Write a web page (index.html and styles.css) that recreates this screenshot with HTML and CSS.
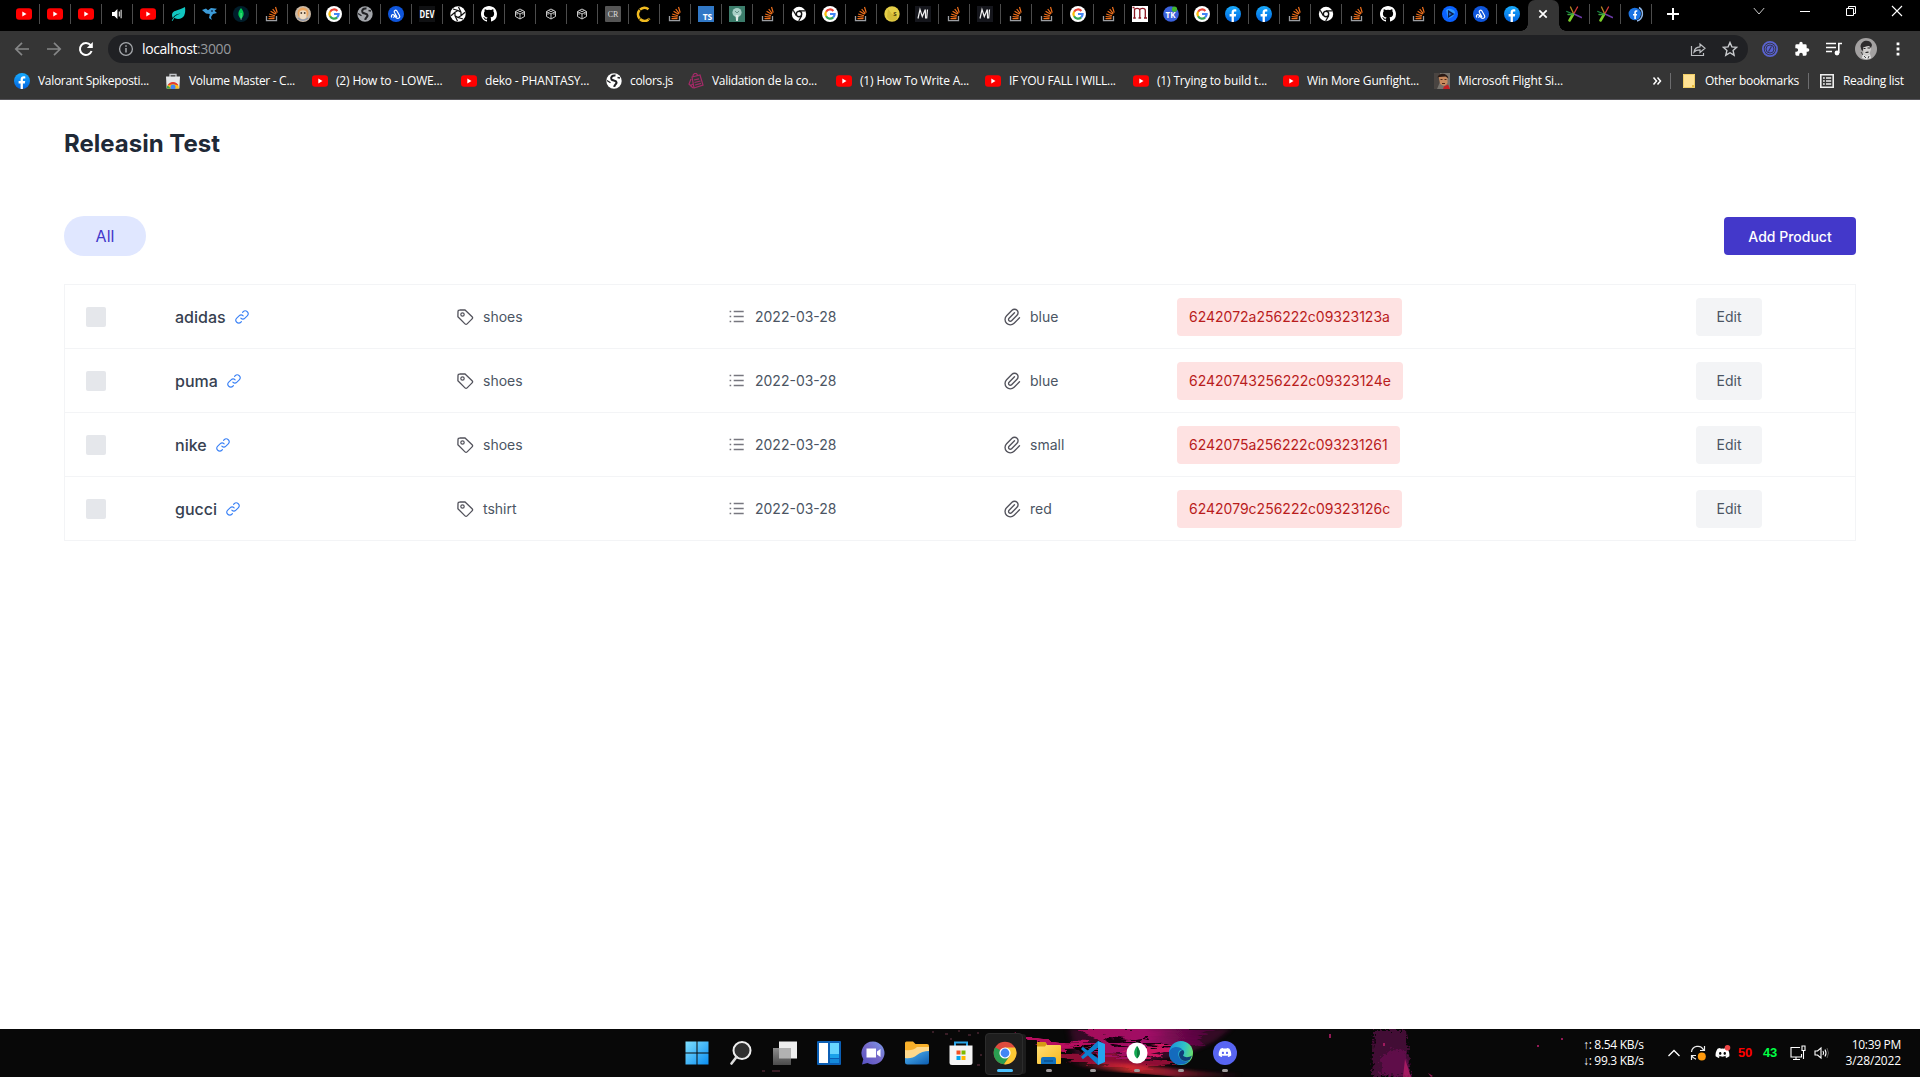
FILE: index.html
```html
<!DOCTYPE html>
<html lang="en">
<head>
<meta charset="utf-8">
<title>Releasin Test</title>
<link rel="stylesheet" href="styles.css">
</head>
<body>
<svg class="sprite" aria-hidden="true">
  <defs>
    <linearGradient id="gfb" x1="0" y1="0" x2="0" y2="1"><stop offset="0" stop-color="#18acfe"/><stop offset="1" stop-color="#0163e0"/></linearGradient>
    <linearGradient id="gwin" x1="0" y1="0" x2="1" y2="1"><stop offset="0" stop-color="#7fe0ff"/><stop offset="1" stop-color="#0a8df0"/></linearGradient>
    <linearGradient id="gchat" x1="1" y1="0" x2="0" y2="1"><stop offset="0" stop-color="#7b9bea"/><stop offset=".5" stop-color="#7568c8"/><stop offset="1" stop-color="#5552c4"/></linearGradient>
    <linearGradient id="gfold" x1="0" y1="0" x2="1" y2="1"><stop offset="0" stop-color="#ffe27a"/><stop offset="1" stop-color="#f9b81f"/></linearGradient>
    <linearGradient id="gblue" x1="0" y1="0" x2="1" y2="1"><stop offset="0" stop-color="#56b8f4"/><stop offset="1" stop-color="#0b5cb0"/></linearGradient>
    <linearGradient id="gedge" x1="0" y1=".3" x2="1" y2=".5"><stop offset="0" stop-color="#1c8fdc"/><stop offset=".6" stop-color="#2fc2c8"/><stop offset="1" stop-color="#6be06b"/></linearGradient>
    <linearGradient id="ggrey" x1="0" y1="0" x2="0" y2="1"><stop offset="0" stop-color="#8c8c8c"/><stop offset="1" stop-color="#4b4b4b"/></linearGradient>
    <linearGradient id="gsky" x1="0" y1="0" x2="1" y2="0"><stop offset="0" stop-color="#a50c58"/><stop offset=".5" stop-color="#a00a66"/><stop offset="1" stop-color="#5b0748" stop-opacity=".5"/></linearGradient>
    <linearGradient id="gred" x1="0" y1="0" x2="1" y2="0"><stop offset="0" stop-color="#a01238" stop-opacity=".1"/><stop offset=".35" stop-color="#e0302f"/><stop offset=".6" stop-color="#a81d38"/><stop offset="1" stop-color="#5a1020" stop-opacity=".1"/></linearGradient>
    <filter id="rough" x="-5%" y="-20%" width="110%" height="140%"><feTurbulence type="fractalNoise" baseFrequency=".04 .35" numOctaves="3" seed="4"/><feDisplacementMap in="SourceGraphic" scale="16"/></filter>
    <filter id="soft"><feGaussianBlur stdDeviation="3 1.500"/></filter>
    <filter id="grain"><feTurbulence type="fractalNoise" baseFrequency=".35" numOctaves="2" seed="7" result="n"/><feDisplacementMap in="SourceGraphic" in2="n" scale="9"/></filter>
  </defs>
  <symbol id="yt" viewBox="0 0 16 16"><rect y="2.200" width="16" height="11.600" rx="3" fill="#f00"/><path d="M6.300 5.600v4.800L10.500 8z" fill="#fff"/></symbol>
  <symbol id="sound" viewBox="0 0 16 16"><path d="M3 6h2.400L8.400 3v10l-3-3H3zM9.800 5.400h1v5.200h-1zM11.600 3.800h1v8.400h-1z" fill="#fff"/></symbol>
  <symbol id="leaf" viewBox="0 0 16 16"><path d="M1 9C1 4 7 5 14 1c1 7-1 12-7 12-2 0-3-.6-3.600-1.200L1.500 15l-.8-.6C3 10.500 6 8.500 9.500 7.500 5 8 3 10 1.800 12 1.200 11 1 10 1 9z" fill="#11c6c0"/></symbol>
  <symbol id="bird" viewBox="0 0 16 16"><path d="M0 4l4-1.500 2 1.800L9 2l6 .7-2.500 2L15 7l-4 1-2 3 .8 3L7 12l.8-4L4 7.500z" fill="#3c9bd8"/><circle cx="10" cy="5" r="1" fill="#13365c"/></symbol>
  <symbol id="mongo" viewBox="0 0 16 16"><circle cx="8" cy="8" r="8" fill="#001e2b"/><path d="M8 2c4 4.500 3 8.500 0 11C5 10.500 4 6.500 8 2z" fill="#00c853"/><path d="M7.800 7h.5v7h-.5z" fill="#b5f0ce"/></symbol>
  <symbol id="so" viewBox="0 0 16 16"><path d="M2.500 10v4.600h10V10" fill="none" stroke="#9b9ea3" stroke-width="1.300"/><path d="M4.500 12.600h6M4.600 10.500l6 .6M5.200 8l5.700 1.700M6.600 5.300l5 3M8.700 3l3.600 4.600M11.500 1l1.700 5.600" stroke="#f0701c" stroke-width="1.200"/></symbol>
  <symbol id="face" viewBox="0 0 16 16"><circle cx="8" cy="8" r="8" fill="#c9b9a6"/><circle cx="8" cy="7" r="5.500" fill="#e9a45f"/><path d="M4.500 6.500c0-3 7-3 7 0v4.500c-2 3-5 3-7 0z" fill="#efdcc2"/><circle cx="6.300" cy="7" r=".9" fill="#46382f"/><circle cx="9.700" cy="7" r=".9" fill="#46382f"/><path d="M3 12c3 3 7 3 10 0" stroke="#8d97ad" stroke-width="1.500" fill="none"/></symbol>
  <symbol id="google" viewBox="0 0 16 16"><circle cx="8" cy="8" r="8" fill="#fff"/><g fill="none" stroke-width="2.200"><path d="M4.100 5.700A4.600 4.600 0 0 1 11.400 4.900" stroke="#ea4335"/><path d="M4.100 10.400A4.600 4.600 0 0 1 4.100 5.600" stroke="#fbbc05"/><path d="M11.200 11.400A4.600 4.600 0 0 1 4.100 10.300" stroke="#34a853"/><path d="M8 8h4.600a4.600 4.600 0 0 1-1.500 3.400" stroke="#4285f4"/></g></symbol>
  <symbol id="globe" viewBox="0 0 16 16"><circle cx="8" cy="8" r="7.700" fill="currentColor"/><path d="M9.500 2.500C6 2 4.500 4.500 5.500 6.300c1 1.500 4.800.8 5 3 .2 1.800-2 2.200-2.300 4.500" fill="none" stroke="#202124" stroke-width="2.100"/><path d="M1 7.500l3.500 2.300M11.500 4.500l2.500.5" stroke="#202124" stroke-width="1.300"/></symbol>
  <symbol id="acircle" viewBox="0 0 16 16"><circle cx="8" cy="8" r="8" fill="#0f56dc"/><g fill="none" stroke="#fff" stroke-width="1.200"><path d="M4 11.500c-1.500-1.500 0-3.500 1.500-2.800L8.500 12c2 1 4-.5 3-2.500L8.800 4.800c-1.300-1.300-3 0-2.500 1.500L9 11M7.500 8.500l-2 3.300"/></g></symbol>
  <symbol id="swirl" viewBox="0 0 16 16"><circle cx="8" cy="8" r="7.700" fill="#fff"/><path d="M8 4.500l3 1.800v3.400l-3 1.800-3-1.800V6.300zM11 6.300L8.500 1M11 9.700l4-3.500M8 11.500l5 1.500M5 9.700L7.500 15M5 6.300L1 9.800M8 4.500L3 3" fill="none" stroke="#111" stroke-width="1.200"/></symbol>
  <symbol id="github" viewBox="0 0 16 16"><path fill="#fff" d="M8 0C3.580 0 0 3.580 0 8c0 3.540 2.290 6.530 5.470 7.590.4.070.55-.17.55-.38v-1.490c-2.230.48-2.700-1.070-2.700-1.070-.36-.92-.89-1.170-.89-1.170-.73-.5.050-.49.050-.49.810.06 1.230.83 1.230.83.720 1.230 1.880.87 2.340.67.070-.52.280-.87.510-1.070-1.780-.2-3.640-.89-3.640-3.950 0-.87.310-1.590.82-2.150-.08-.2-.36-1.020.08-2.120 0 0 .67-.21 2.200.82a7.600 7.600 0 0 1 4 0c1.530-1.040 2.200-.82 2.200-.82.440 1.100.16 1.920.08 2.120.51.560.82 1.270.82 2.150 0 3.070-1.870 3.750-3.650 3.950.29.250.54.730.54 1.480v2.200c0 .21.150.46.550.38A8 8 0 0 0 16 8c0-4.420-3.580-8-8-8z"/></symbol>
  <symbol id="cube" viewBox="0 0 16 16"><path d="M8 3l4.500 2.500v5L8 13l-4.500-2.500v-5zM3.500 5.500L8 8l4.500-2.500M8 8v5M5.500 4.300L8 5.700l2.500-1.400M5 6.300v2.500M11 6.300v2.500" fill="none" stroke="#c9c9c9" stroke-width="1"/></symbol>
  <symbol id="cring" viewBox="0 0 16 16"><path d="M12.500 3.200A6.500 6.500 0 1 0 13.500 12.500" fill="none" stroke="#f0bb20" stroke-width="2.600" stroke-dasharray="9 .6"/></symbol>
  <symbol id="lamp" viewBox="0 0 16 16"><rect width="16" height="16" fill="#3c7d6b"/><circle cx="8" cy="6.500" r="4.600" fill="#a8cfc6"/><path d="M6.500 9h3l-.6 6H7.100z" fill="#dce9e5"/><path d="M6 5l2 2 2-2" stroke="#648f86" fill="none"/></symbol>
  <symbol id="chromew" viewBox="0 0 16 16"><circle cx="8" cy="8" r="7.200" fill="#fff"/><circle cx="8" cy="8" r="2.700" fill="#fff" stroke="#111" stroke-width="1.400"/><path d="M8 4.900h6.300M5.300 9.600L2.200 4.200M10.700 9.600l-3 5.400" stroke="#111" stroke-width="1.200"/></symbol>
  <symbol id="mdark" viewBox="0 0 16 16"><rect width="16" height="16" fill="#15161c"/><path d="M3 12.500l2-9 2.300 7 3-7 .3 9M12.500 3.500l-.8 9" fill="none" stroke="#f2f2f2" stroke-width="1.200"/></symbol>
  <symbol id="mred" viewBox="0 0 16 16"><rect width="16" height="16" fill="#fff"/><path d="M2.500 12V2.500M2.500 4c0-2 5.300-2.500 5.300.5V12M7.800 4c0-2 5.500-2.500 5.500.5V12M.5 1.500h2M12 12h3M1.200 12h2.600M6.500 12h2.600" fill="none" stroke="#8c1822" stroke-width="1.300"/></symbol>
  <symbol id="fb" viewBox="0 0 16 16"><circle cx="8" cy="8" r="8" fill="url(#gfb)"/><path d="M8.900 16v-5.600h1.900l.4-2.300H8.900V6.700c0-.7.300-1.200 1.200-1.200h1.200V3.400c-2.700-.6-4.700.1-4.700 2.900v1.800h-2v2.300h2V16z" fill="#fff"/></symbol>
  <symbol id="play" viewBox="0 0 16 16"><circle cx="8" cy="8" r="8" fill="#0b62ff"/><path d="M4 4a6 6 0 0 1 9 2c0 3-3 6-7 6.500z" fill="#2f98ff"/><path d="M6 4v8l6.500-4z" fill="#09204e"/><path d="M7 6.500v3.200L9.800 8z" fill="#1c62d8"/></symbol>
  <symbol id="burst" viewBox="0 0 16 16"><g stroke-linecap="round"><path d="M7 8L.8 5.500" stroke="#1d8d4a" stroke-width="1.300"/><path d="M7.500 7.500L4.500 1" stroke="#b98422" stroke-width="1.300"/><path d="M8 7.500l3.500-6.500" stroke="#d63b3b" stroke-width="1.300"/><path d="M8 8l7.500 3.500" stroke="#6a3aa5" stroke-width="1.400"/><path d="M7 8.500L3.500 14.500" stroke="#7bcf2a" stroke-width="2.600"/><path d="M7 8.500H2" stroke="#3ca63d" stroke-width="1.400"/></g></symbol>
  <symbol id="fring" viewBox="0 0 16 16"><circle cx="6.800" cy="8" r="6.200" fill="#1b74e4"/><path d="M7.100 13V6.300c0-1 .6-1.400 2.200-1.300M5 8.700h4" stroke="#fff" stroke-width="1.600" fill="none"/><path d="M11 1.500a7.500 7.500 0 0 1-2 13.500" fill="none" stroke="#8fb7ea" stroke-width="1.500"/></symbol>
  <symbol id="store" viewBox="0 0 16 16"><path d="M5 4V1.500h6V4" fill="none" stroke="#c5c8cc" stroke-width="1.300"/><path d="M1 3.500h14l-.6 12H1.600z" fill="#e4e6e8"/><path d="M2 15.500a6 6 0 0 1 12 0z" fill="#fbc116"/><path d="M2.500 12.500a6 6 0 0 1 11 0L8 11z" fill="#e33b2e"/><path d="M1.800 15.500c0-1.500.3-2 .8-3l3.400 3z" fill="#2f9e4f"/><circle cx="8" cy="14" r="2.500" fill="#4285f4"/></symbol>
  <symbol id="valid" viewBox="0 0 16 16"><path d="M4 4l8-2 3 10-9 3zM5 4c-.5-4 4-5 4.500-1.500M6 7l5-1.200M6.500 9.500l6-1.500M3 6l-2 5 4 4M2 13l3-2M7 12l6-1.600" fill="none" stroke="#a52a68" stroke-width="1.200"/></symbol>
  <symbol id="pilot" viewBox="0 0 16 16"><rect width="16" height="16" fill="#77736d"/><path d="M0 0h6v9l-3 7H0z" fill="#4a4542"/><path d="M4.500 3c2-2 9-2 9 2v4.500c-1 4-5 4-7.500 1z" fill="#c98a5e"/><path d="M3.500 4.500c1-5 10-5 11 1l-3-2-6 .5z" fill="#2b1a14"/><path d="M10 13.500l4-2 2 4.500H9z" fill="#c51f24"/><path d="M6.500 6.500h2M10.500 6.500h2M8 10.500h3" stroke="#4c2a1a"/></symbol>
  <symbol id="chrome" viewBox="0 0 24 24"><circle cx="12" cy="12" r="11.300" fill="#de4b3e"/><path d="M2.200 6.300A11.300 11.300 0 0 0 11 23.300L16.900 14.800 12 12z" fill="#2a9e50"/><path d="M11 23.300A11.300 11.300 0 0 0 22 6.500H12l4.900 8.300z" fill="#fcc934"/><circle cx="12" cy="12" r="5.600" fill="#fff"/><circle cx="12" cy="12" r="4.400" fill="#4285f4"/></symbol>
  <symbol id="discord" viewBox="0 0 24 24"><path fill="currentColor" d="M18.600 6.300a14 14 0 0 0-3.600-1.100l-.5 1a13 13 0 0 0-5 0l-.5-1c-1.300.2-2.500.6-3.600 1.100C3.100 9.700 2.500 13 2.800 16.300c1.500 1.100 3 1.800 4.400 2.200l1-1.700-1.500-.7.400-.3c3 1.400 6.700 1.400 9.800 0l.4.300-1.500.7 1 1.700c1.400-.4 2.900-1.100 4.400-2.200.4-3.800-.6-7.100-2.600-10zM9 14.300c-.9 0-1.600-.8-1.600-1.800S8.100 10.700 9 10.700s1.600.8 1.600 1.800-.7 1.800-1.600 1.800zm6 0c-.9 0-1.600-.8-1.600-1.800s.7-1.800 1.600-1.800 1.600.8 1.600 1.800-.7 1.800-1.600 1.800z"/></symbol>
  <symbol id="tag" viewBox="0 0 18 18"><path d="M2 3.500A1.500 1.500 0 0 1 3.500 2l5.300-.2 7.300 7a1.500 1.500 0 0 1 0 2.100l-5 5a1.500 1.500 0 0 1-2.100 0L1.900 8.700z" fill="none" stroke="#52525b" stroke-width="1.300" stroke-linejoin="round"/><circle cx="6.500" cy="6.500" r="1.700" fill="none" stroke="#52525b" stroke-width="1.200"/></symbol>
  <symbol id="list" viewBox="0 0 20 20"><path d="M6.700 4.500h10M6.700 9.500h10M6.700 14.500h10M2.600 4.500h1.600M2.600 9.500h1.600M2.600 14.500h1.600" stroke="#77777f" stroke-width="1.500"/></symbol>
  <symbol id="clip" viewBox="0 0 20 20"><path d="M12.500 5.833L7.083 11.250a1.768 1.768 0 1 0 2.500 2.500L15 8.333a3.536 3.536 0 1 0-5-5L4.583 8.750a5.303 5.303 0 1 0 7.500 7.500L17.500 10.833" fill="none" stroke="#52525b" stroke-width="1.350" stroke-linecap="round" stroke-linejoin="round"/></symbol>
  <symbol id="link" viewBox="0 0 16 16"><path d="M6.667 9.333a3.333 3.333 0 0 0 4.666 0L14 6.667A3.300 3.300 0 0 0 9.333 2l-.666.667M9.333 6.667a3.333 3.333 0 0 0-4.666 0L2 9.333A3.300 3.300 0 0 0 6.667 14l.666-.667" fill="none" stroke="#3b82f6" stroke-width="1.300" stroke-linecap="round" stroke-linejoin="round"/></symbol>
</svg>

<header class="browser">
  <div class="tabs">
    <div class="tab"><svg><use href="#yt"/></svg></div>
    <div class="tab"><svg><use href="#yt"/></svg></div>
    <div class="tab"><svg><use href="#yt"/></svg></div>
    <div class="tab"><svg><use href="#sound"/></svg></div>
    <div class="tab"><svg><use href="#yt"/></svg></div>
    <div class="tab"><svg><use href="#leaf"/></svg></div>
    <div class="tab"><svg><use href="#bird"/></svg></div>
    <div class="tab"><svg><use href="#mongo"/></svg></div>
    <div class="tab"><svg><use href="#so"/></svg></div>
    <div class="tab"><svg><use href="#face"/></svg></div>
    <div class="tab"><svg><use href="#google"/></svg></div>
    <div class="tab"><svg class="muted"><use href="#globe"/></svg></div>
    <div class="tab"><svg><use href="#acircle"/></svg></div>
    <div class="tab"><svg viewBox="0 0 16 16"><rect width="16" height="16" fill="#101113"/><text x=".5" y="11.500" textLength="15" lengthAdjust="spacingAndGlyphs" class="glyph bold" fill="#fff" font-size="10">DEV</text></svg></div>
    <div class="tab"><svg><use href="#swirl"/></svg></div>
    <div class="tab"><svg><use href="#github"/></svg></div>
    <div class="tab"><svg><use href="#cube"/></svg></div>
    <div class="tab"><svg><use href="#cube"/></svg></div>
    <div class="tab"><svg><use href="#cube"/></svg></div>
    <div class="tab"><svg viewBox="0 0 16 16"><rect width="16" height="16" rx="1" fill="#555"/><text x="8" y="11" text-anchor="middle" class="glyph serif" fill="#ddd" font-size="8">CR</text></svg></div>
    <div class="tab"><svg><use href="#cring"/></svg></div>
    <div class="tab"><svg><use href="#so"/></svg></div>
    <div class="tab"><svg viewBox="0 0 16 16"><rect width="16" height="16" fill="#3178c6"/><text x="9.500" y="14" text-anchor="middle" class="glyph bold" fill="#fff" font-size="8.500">TS</text></svg></div>
    <div class="tab"><svg><use href="#lamp"/></svg></div>
    <div class="tab"><svg><use href="#so"/></svg></div>
    <div class="tab"><svg><use href="#chromew"/></svg></div>
    <div class="tab"><svg><use href="#google"/></svg></div>
    <div class="tab"><svg><use href="#so"/></svg></div>
    <div class="tab"><svg viewBox="0 0 16 16"><circle cx="8" cy="8" r="7.700" fill="#e5ce47"/><path d="M4 3l4 5h5v5c-3 2.500-8 2-10-2z" fill="#d3bb38"/><text x="11" y="10" text-anchor="middle" class="glyph bold" fill="#4d410c" font-size="6">S</text></svg></div>
    <div class="tab"><svg><use href="#mdark"/></svg></div>
    <div class="tab"><svg><use href="#so"/></svg></div>
    <div class="tab"><svg><use href="#mdark"/></svg></div>
    <div class="tab"><svg><use href="#so"/></svg></div>
    <div class="tab"><svg><use href="#so"/></svg></div>
    <div class="tab"><svg><use href="#google"/></svg></div>
    <div class="tab"><svg><use href="#so"/></svg></div>
    <div class="tab"><svg><use href="#mred"/></svg></div>
    <div class="tab"><svg viewBox="0 0 16 16"><circle cx="8" cy="8" r="7.800" fill="#3a62dc"/><circle cx="11.500" cy="3.200" r="2.600" fill="#43b52f"/><text x="7.500" y="12" text-anchor="middle" class="glyph bold" fill="#fff" font-size="8">TK</text></svg></div>
    <div class="tab"><svg><use href="#google"/></svg></div>
    <div class="tab"><svg><use href="#fb"/></svg></div>
    <div class="tab"><svg><use href="#fb"/></svg></div>
    <div class="tab"><svg><use href="#so"/></svg></div>
    <div class="tab"><svg><use href="#chromew"/></svg></div>
    <div class="tab"><svg><use href="#so"/></svg></div>
    <div class="tab"><svg><use href="#github"/></svg></div>
    <div class="tab"><svg><use href="#so"/></svg></div>
    <div class="tab"><svg><use href="#play"/></svg></div>
    <div class="tab"><svg><use href="#acircle"/></svg></div>
    <div class="tab plain"><svg><use href="#fb"/></svg></div>
    <div class="tab active"><svg viewBox="0 0 16 16"><path d="M4.300 4.300l7.400 7.400M11.700 4.300l-7.400 7.400" stroke="#fff" stroke-width="1.700"/></svg></div>
    <div class="tab"><svg><use href="#burst"/></svg></div>
    <div class="tab"><svg><use href="#burst"/></svg></div>
    <div class="tab"><svg><use href="#fring"/></svg></div>
    <svg class="newtab" viewBox="0 0 16 16"><path d="M8 2v12M2 8h12" stroke="#fff" stroke-width="2"/></svg>
    <div class="window-controls">
      <svg viewBox="0 0 12 12"><path d="M.8 3l5.200 6 5.200-6" fill="none" stroke="#c9c9c9"/></svg>
      <svg viewBox="0 0 12 12"><path d="M1 6.500h10" stroke="#fff"/></svg>
      <svg viewBox="0 0 12 12"><path d="M1.500 3.500h7v7h-7zM3.500 3.500v-2h7v7h-2" fill="none" stroke="#fff"/></svg>
      <svg viewBox="0 0 12 12"><path d="M1 1l10 10M11 1L1 11" stroke="#fff" stroke-width="1.100"/></svg>
    </div>
  </div>

  <div class="toolbar">
    <svg class="nav" viewBox="0 0 16 16"><path d="M15 8H2M8 1.800L1.800 8 8 14.200" fill="none" stroke="#858687" stroke-width="1.700"/></svg>
    <svg class="nav" viewBox="0 0 16 16"><path d="M1 8h13M8 1.800L14.200 8 8 14.200" fill="none" stroke="#858687" stroke-width="1.700"/></svg>
    <svg class="nav" viewBox="0 0 16 16"><path d="M13.600 10A6 6 0 1 1 12.600 4.200" fill="none" stroke="#fff" stroke-width="2"/><path d="M14.800 1v6h-6z" fill="#fff"/></svg>
    <div class="omnibox">
      <svg viewBox="0 0 16 16"><circle cx="8" cy="8" r="6.400" fill="none" stroke="#a5a8ac" stroke-width="1.300"/><path d="M8 7v4.500M8 4.300v1.500" stroke="#a5a8ac" stroke-width="1.500"/></svg>
      <span class="url">localhost<span class="port">:3000</span></span>
      <svg viewBox="0 0 16 16"><path d="M1.500 5v9.500h12V12M4 11c.5-3.500 2.500-5 6-5.200V3l5 4.300-5 4.200V8.800c-3 0-4.500.4-6 2.200z" fill="none" stroke="#bdbfc2" stroke-width="1.200"/></svg>
      <svg viewBox="0 0 16 16"><path d="M8 1.500l1.900 4.400 4.800.4-3.600 3.200 1 4.700L8 11.700l-4.200 2.500 1.100-4.700-3.600-3.200 4.800-.4z" fill="none" stroke="#c9cbce" stroke-width="1.400"/></svg>
    </div>
    <div class="actions">
      <svg viewBox="0 0 16 16"><circle cx="8" cy="8" r="7.100" fill="none" stroke="#5a63d0" stroke-width="1.800"/><circle cx="8" cy="8" r="5.400" fill="#5a63d0"/><circle cx="8" cy="8" r="4" fill="none" stroke="#30335a" stroke-width="1"/><path d="M9.500 5.500l-3 5" stroke="#30335a" stroke-width="1.200"/></svg>
      <svg viewBox="0 0 24 24"><path d="M20.500 11H19V7a2 2 0 0 0-2-2h-4V3.500a2.500 2.500 0 0 0-5 0V5H4a2 2 0 0 0-2 2v3.800h1.500a2.700 2.700 0 0 1 0 5.400H2V20a2 2 0 0 0 2 2h3.800v-1.500a2.700 2.700 0 0 1 5.400 0V22H17a2 2 0 0 0 2-2v-4h1.500a2.500 2.500 0 0 0 0-5z" fill="#fff"/></svg>
      <svg viewBox="0 0 16 16"><path d="M0 2.500h10M0 6.500h10M0 10.500h6M12.800 12V2.500H16" fill="none" stroke="#fff" stroke-width="1.600"/><circle cx="11" cy="12" r="2.400" fill="#fff"/></svg>
      <svg class="avatar" viewBox="0 0 22 22"><circle cx="11" cy="11" r="11" fill="#a3a1a1"/><path d="M5.500 8.500C6 1 16 1 17 7l-1 3-2-2-5 1-1 4-1.500-1z" fill="#2d2b2c"/><path d="M8 9.500l6-1.500 2 3-1.500 5-3.500 2-2.500-3z" fill="#d0cecd"/><path d="M8.500 10.500h2M12.500 10h2.500M10.500 14.500l3-.3" stroke="#222" stroke-width="1.200"/><path d="M8 15l3 3 4-2 1 4c-2 1.500-6 1.500-9 0z" fill="#e2e2e2"/><path d="M9 18l2 2M14 18l-1 2.500M6 14l2 3" stroke="#444"/></svg>
      <svg viewBox="0 0 16 16"><path d="M6.600 1.500h2.800v2.800H6.600zM6.600 6.600h2.800v2.800H6.600zM6.600 11.700h2.800v2.800H6.600z" fill="#fff"/></svg>
    </div>
  </div>

  <nav class="bookmarks">
    <div class="bm"><svg><use href="#fb"/></svg><span>Valorant Spikeposti...</span></div>
    <div class="bm"><svg><use href="#store"/></svg><span>Volume Master - C...</span></div>
    <div class="bm wide"><svg><use href="#yt"/></svg><span>(2) How to - LOWE...</span></div>
    <div class="bm wide"><svg><use href="#yt"/></svg><span>deko - PHANTASY...</span></div>
    <div class="bm"><svg class="bright"><use href="#globe"/></svg><span>colors.js</span></div>
    <div class="bm"><svg><use href="#valid"/></svg><span>Validation de la co...</span></div>
    <div class="bm wide"><svg><use href="#yt"/></svg><span>(1) How To Write A...</span></div>
    <div class="bm"><svg><use href="#yt"/></svg><span>IF YOU FALL I WILL...</span></div>
    <div class="bm wide"><svg><use href="#yt"/></svg><span>(1) Trying to build t...</span></div>
    <div class="bm wide"><svg><use href="#yt"/></svg><span>Win More Gunfight...</span></div>
    <div class="bm wide"><svg><use href="#pilot"/></svg><span>Microsoft Flight Si...</span></div>
    <svg class="more" viewBox="0 0 10 10"><path d="M1.500 1.500L4.500 5l-3 3.500M5.500 1.500L8.500 5l-3 3.500" fill="none" stroke="#fff" stroke-width="1.500"/></svg>
    <div class="bm ruled"><svg viewBox="0 0 16 16"><path d="M2 1h12v14H2z" fill="#ffe294"/><path d="M11 15v-3h3v3z" fill="#e8bb3c"/><path d="M2.500 1.500h11v13h-11z" fill="none" stroke="#f0cd65"/></svg><span>Other bookmarks</span></div>
    <div class="bm ruled"><svg viewBox="0 0 16 16"><path d="M1.800 1.800h12.400v12.400H1.800z" fill="none" stroke="#eee" stroke-width="1.600"/><path d="M4 5h1.800M7 5h5.200M4 8h1.800M7 8h5.200M4 11h1.800M7 11h5.200" stroke="#eee" stroke-width="1.600"/></svg><span>Reading list</span></div>
  </nav>
</header>

<main class="page">
  <h1>Releasin Test</h1>
  <div class="controls">
    <button class="pill">All</button>
    <button class="add">Add Product</button>
  </div>
  <div class="products">
    <div class="product">
      <span class="check"></span>
      <div class="name">adidas<svg><use href="#link"/></svg></div>
      <div class="meta"><svg class="i-tag"><use href="#tag"/></svg>shoes</div>
      <div class="meta"><svg><use href="#list"/></svg>2022-03-28</div>
      <div class="meta"><svg><use href="#clip"/></svg>blue</div>
      <div><span class="badge">6242072a256222c09323123a</span></div>
      <button class="edit">Edit</button>
    </div>
    <div class="product">
      <span class="check"></span>
      <div class="name">puma<svg><use href="#link"/></svg></div>
      <div class="meta"><svg class="i-tag"><use href="#tag"/></svg>shoes</div>
      <div class="meta"><svg><use href="#list"/></svg>2022-03-28</div>
      <div class="meta"><svg><use href="#clip"/></svg>blue</div>
      <div><span class="badge">62420743256222c09323124e</span></div>
      <button class="edit">Edit</button>
    </div>
    <div class="product">
      <span class="check"></span>
      <div class="name">nike<svg><use href="#link"/></svg></div>
      <div class="meta"><svg class="i-tag"><use href="#tag"/></svg>shoes</div>
      <div class="meta"><svg><use href="#list"/></svg>2022-03-28</div>
      <div class="meta"><svg><use href="#clip"/></svg>small</div>
      <div><span class="badge">6242075a256222c093231261</span></div>
      <button class="edit">Edit</button>
    </div>
    <div class="product">
      <span class="check"></span>
      <div class="name">gucci<svg><use href="#link"/></svg></div>
      <div class="meta"><svg class="i-tag"><use href="#tag"/></svg>tshirt</div>
      <div class="meta"><svg><use href="#list"/></svg>2022-03-28</div>
      <div class="meta"><svg><use href="#clip"/></svg>red</div>
      <div><span class="badge">6242079c256222c09323126c</span></div>
      <button class="edit">Edit</button>
    </div>
  </div>
</main>

<footer class="taskbar">
  <svg class="wallpaper" viewBox="0 0 1920 48">
    <path d="M1070 0h160l-15 12-30 14-60 10-50-10z" fill="#5a0a3c" opacity=".55" filter="url(#soft)"/>
    <g filter="url(#rough)">
      <path d="M1016 5l44 8 36 1-6 5-30 1-24-5z" fill="#b80f5e"/>
      <path d="M1076 0h142l-22 9 8 6-34 8-30 6-36-2-22-8 20-6z" fill="url(#gsky)"/>
      <path d="M1040 23l62 3 30 4 50 4-36 6-40-3-40-6z" fill="#8e1034"/>
      <path d="M1100 7l28 3 24-4-14 7-26 3zM1142 16l36-2-14 6-28 1z" fill="#16040f"/>
      <path d="M1070 17l34 3-20 5z" fill="#090506"/>
      <path d="M1120 22l40-5 22 3-34 8z" fill="#cc1661"/>
    </g>
    <path d="M1070 32q40 0 90 6t78 6v4h-60q-50-3-100-11z" fill="url(#gred)" opacity=".8" filter="url(#soft)"/>
    <path d="M1095 43q50 1 80 5h-90z" fill="#0d0608"/>
    <path d="M1374 1h32l5 47h-39z" fill="#430a35" filter="url(#grain)"/>
    <path d="M1382 28l10-8 14 2 4 24h-30z" fill="#5e0d49" filter="url(#grain)"/>
    <path d="M1405 30l6 18h-8zM1329 5h2v4h-2zM1383 14h2v3h-2zM1428 44l5 3-2 1zM1561 9h2v2h-2zM1537 16h2v2h-2z" fill="#b51e68" opacity=".8"/>
    <path d="M932 3h2M945 5h3M958 2h2M968 6h3M977 4h2M950 10h2M980 26h2M977 36h3M762 42h3M772 42h8" stroke="#693344"/>
  </svg>
  <div class="apps">
    <div class="app"><svg viewBox="0 0 24 24"><path d="M.5.500h11v11H.5zM12.500.500h11v11h-11zM.5 12.500h11v11H.5zM12.500 12.500h11v11h-11z" fill="url(#gwin)"/></svg></div>
    <div class="app"><svg viewBox="0 0 24 24"><circle cx="13" cy="9.500" r="8.500" fill="#303030" stroke="#eee" stroke-width="2"/><path d="M7.500 16L2.500 22.500" stroke="#ddd" stroke-width="2.600" stroke-linecap="round"/></svg></div>
    <div class="app"><svg viewBox="0 0 24 24"><path d="M6 .5h18v17H6z" fill="#eee"/><path d="M0 7h18v17H0z" fill="url(#ggrey)"/><path d="M6 7h12v10.500H6z" fill="#b2b2b2"/></svg></div>
    <div class="app"><svg viewBox="0 0 24 24"><rect width="24" height="24" rx="1" fill="#0b5fb5"/><path d="M2 2h9v20H2z" fill="#fff"/><path d="M13 2h9v11h-9z" fill="#68d6ff"/><path d="M13 13h9v4h-9z" fill="#1ba2ea"/><path d="M13 18h9v4h-9z" fill="#158adb"/></svg></div>
    <div class="app"><svg viewBox="0 0 24 24"><path d="M12 .5a11.500 11.500 0 1 1-5.500 21.600L1 23.500l1.300-5.300A11.500 11.500 0 0 1 12 .5z" fill="url(#gchat)"/><path d="M5.500 7.500h9.500v9H5.500zM16 10.500l3.500-2.500v8L16 13.500z" fill="#fff"/></svg></div>
    <div class="app"><svg viewBox="0 0 24 24"><path d="M0 2q0-1.500 1.500-1.500H8L10.500 3H22q2 0 2 2v8H0z" fill="#f8b02a"/><path d="M0 9q8 1 12-3h12v14H0z" fill="#ffd98c"/><path d="M0 17q7 1 12-3t12-4v11q0 2.500-2.500 2.500h-19Q0 23.500 0 21z" fill="url(#gblue)"/></svg></div>
    <div class="app"><svg viewBox="0 0 24 24"><path d="M6 5V1.500h12V5" fill="none" stroke="#2aa7ea" stroke-width="2"/><path d="M.5 4.500h23v17q0 2.500-2.500 2.500H3Q.5 24 .5 21.500z" fill="#f5f5f5"/><path d="M7.500 9.500h4v4h-4z" fill="#f25022"/><path d="M12.500 9.500h4v4h-4z" fill="#7fba00"/><path d="M7.500 15h4v4h-4z" fill="#00a4ef"/><path d="M12.500 15h4v4h-4z" fill="#ffb900"/></svg></div>
    <div class="app current"><svg><use href="#chrome"/></svg></div>
    <div class="app open"><svg viewBox="0 0 24 24"><path d="M0 2q0-1 1-1h7l2 3h13q1 0 1 1v17q0 1-1 1H1q-1 0-1-1z" fill="url(#gfold)"/><path d="M0 2q0-1 1-1h7l2 2-2 2.500H0z" fill="#d79a14"/><path d="M4 23v-5q0-2 2-2h11q2 0 2 2v5z" fill="#1071bf"/><path d="M7 20h9" stroke="#0b4c88" stroke-width="1.300"/></svg></div>
    <div class="app open"><svg viewBox="0 0 24 24"><path d="M17 6.500v11L1.800 5.800 0 8l17 16 2-2V2l-2-2L0 15.800l1.800 2.400z" fill="#0d7fd0"/><path d="M17 0l7 3v18l-7 3z" fill="#25a5ee"/></svg></div>
    <div class="app open"><svg viewBox="0 0 24 24"><circle cx="12" cy="12" r="10.500" fill="#fff"/><path d="M12 5c4 5 3.500 9.500 0 12.500C8.500 14.500 8 10 12 5z" fill="#13aa52"/><path d="M12 5c4 5 3.500 9.500 0 12.500z" fill="#0b7a3c"/></svg></div>
    <div class="app open"><svg viewBox="0 0 24 24"><circle cx="12" cy="12" r="12" fill="url(#gedge)"/><path d="M0 12C1 5 10 4 14 9c-4-1-6 3-4 7 2 5 8 5 11 3-5 7-20 7-21-7z" fill="#146bbd"/><path d="M14 9c2 2 1 4 0 5.500 2 2.500 6 2 9 0-1 2-1.500 3.500-2.500 4.500-4 2-8.500 1-10-3s1-7 3.500-7z" fill="#0f3f78"/></svg></div>
    <div class="app open"><svg viewBox="0 0 24 24"><circle cx="12" cy="12" r="12" fill="#5865f2"/><g transform="translate(3.800 3.400) scale(.68)" color="#fff"><use href="#discord" width="24" height="24"/></g></svg></div>
  </div>
  <div class="tray">
    <div class="net"><span>↑: 8.54 KB/s</span><span>↓: 99.3 KB/s</span></div>
    <svg class="chev" viewBox="0 0 12 12"><path d="M.5 9L6 3.500 11.500 9" fill="none" stroke="#fff" stroke-width="1.300"/></svg>
    <svg class="sync" viewBox="0 0 16 16"><path d="M1.500 7A6.300 6.300 0 0 1 13.500 5M14.500 1v4.500H10M6 14.200A6.300 6.300 0 0 1 2 11M1.500 15v-4.500H6" fill="none" stroke="#eee" stroke-width="1.200"/><circle cx="11.800" cy="11.500" r="4" fill="#ff9a0c"/></svg>
    <svg class="dis" viewBox="0 0 16 16"><g color="#fff"><use href="#discord" x="-1.500" y="-1" width="18" height="18"/></g><circle cx="12.500" cy="2.800" r="2.800" fill="#f04747"/></svg>
    <span class="temp hot">50</span>
    <span class="temp ok">43</span>
    <svg class="lan" viewBox="0 0 16 16"><path d="M10 2.500H1v9.500h10.500V9M6 12v2.500M3 14.500h7M12 1h3v4.500h-3zM13.500 5.500V14" fill="none" stroke="#fff" stroke-width="1.100"/></svg>
    <svg class="vol" viewBox="0 0 16 16"><path d="M1 6h2.500L7 3v10L3.500 10H1zM9 6q1.200 2 0 4M11 4.500q2 3.500 0 7" fill="none" stroke="#fff" stroke-width="1.100"/><path d="M13 3q3 5 0 10" fill="none" stroke="#555"/></svg>
    <div class="clock"><span>10:39 PM</span><span class="date">3/28/2022</span></div>
  </div>
</footer>
</body>
</html>
```
FILE: styles.css
```css
* { box-sizing: border-box; }

body {
  margin: 0;
  width: 1920px;
  height: 1077px;
  overflow: hidden;
  display: flex;
  flex-direction: column;
  background: #fff;
  font-family: Inter, "Liberation Sans", sans-serif;
}

button {
  border: 0;
  margin: 0;
  padding: 0;
  font-family: inherit;
}

svg { display: block; flex: none; width: 16px; height: 16px; }
.sprite { position: absolute; width: 0; height: 0; }
.glyph { font-family: "Open Sans", sans-serif; letter-spacing: 0; }
.glyph.bold { font-weight: 700; }
.glyph.serif { font-family: "Liberation Serif", serif; }
.muted { color: #a3a6ab; }
.bright { color: #fff; }

/* Browser chrome */
.browser {
  flex: none;
  height: 100px;
  background: #353535;
  border-bottom: 1px solid #56555a;
  color: #fff;
  font-family: "Open Sans", "Noto Sans", sans-serif;
}

.tabs {
  display: flex;
  align-items: center;
  height: 31px;
  padding-left: 9px;
  background: #000;
}
.tab {
  flex: none;
  width: 31px;
  height: 20px;
  margin-top: -3px;
  padding: 2px 7px;
  border-right: 1px solid #4c4c4c;
}
.tab.plain { border-color: transparent; }
.tab.active {
  position: relative;
  height: 31px;
  margin-top: 0;
  padding-top: 6px;
  border: 0;
  background: #353535;
  border-radius: 7px 7px 0 0;
}
.tab.active::before,
.tab.active::after {
  content: "";
  position: absolute;
  bottom: 0;
  width: 7px;
  height: 7px;
}
.tab.active::before { left: -7px; background: radial-gradient(circle at 0 0, #000 6.500px, #353535 7px); }
.tab.active::after { right: -7px; background: radial-gradient(circle at 100% 0, #000 6.500px, #353535 7px); }
.newtab { margin: -3px 0 0 13px; }
.window-controls {
  display: flex;
  gap: 34px;
  margin: -9px 17px 0 auto;
}
.window-controls svg { width: 12px; height: 12px; }

.toolbar {
  display: flex;
  align-items: center;
  height: 36px;
  padding-left: 14px;
}
.nav { margin-right: 16px; }
.omnibox {
  display: flex;
  align-items: center;
  width: 1640px;
  height: 28px;
  margin-left: -2px;
  padding: 0 10px;
  border-radius: 14px;
  background: #202124;
}
.url {
  flex: 1;
  margin: -1px 0 0 8px;
  font-size: 14px;
  letter-spacing: -.4px;
}
.port { color: #96999d; }
.omnibox svg + svg { margin-left: 16px; }
.actions {
  display: flex;
  align-items: center;
  gap: 16px;
  margin-left: 14px;
}
.actions .avatar { width: 22px; height: 22px; margin: 0 -3px; }

.bookmarks {
  display: grid;
  grid-template-columns: 151px 147px 149px 145px 82px 148px 149px 148px 150px 151px 218px 18px 138px 101px;
  align-items: center;
  height: 28px;
  padding-left: 14px;
}
.bm {
  display: flex;
  align-items: center;
  gap: 8px;
  height: 16px;
  font-size: 12px;
  letter-spacing: -.3px;
  white-space: nowrap;
}
.bm span { margin-top: -1px; }
.bm.wide { letter-spacing: -.17px; }
.bm.ruled {
  padding-left: 10px;
  border-left: 1px solid #6d6d6f;
}
.more { width: 10px; height: 10px; }

/* Page */
.page {
  flex: 1;
  padding: 0 64px;
}
h1 {
  margin: 26px 0 0;
  color: #1f2937;
  font-size: 24px;
  line-height: 36px;
  font-weight: 700;
}
.controls {
  display: flex;
  align-items: center;
  justify-content: space-between;
  margin-top: 54px;
}
.pill {
  width: 82px;
  height: 40px;
  border-radius: 20px;
  background: #e0e7ff;
  color: #4338ca;
  font-size: 16px;
}
.add {
  width: 132px;
  height: 38px;
  border-radius: 4px;
  background: #4338ca;
  color: #fff;
  font-size: 14px;
  font-weight: 500;
}

.products {
  margin-top: 28px;
  border: 1px solid #f3f4f6;
  border-top: 0;
}
.product {
  display: grid;
  grid-template-columns: 89px 281px 272px 275px 174px 519px 66px;
  align-items: center;
  height: 64px;
  padding-left: 21px;
  border-top: 1px solid #f3f4f6;
}
.check {
  width: 20px;
  height: 20px;
  border-radius: 2px;
  background: #e5e7eb;
}
.name {
  display: flex;
  align-items: center;
  gap: 9px;
  color: #374151;
  font-size: 16px;
  font-weight: 500;
}
.name svg { width: 14px; height: 14px; }
.meta {
  display: flex;
  align-items: center;
  gap: 8px;
  color: #4b5563;
  font-size: 14px;
}
.meta svg { width: 20px; height: 20px; margin-left: -1px; }
.meta .i-tag { width: 18px; height: 18px; margin: 0 1px 0 0; }
.badge {
  display: inline-block;
  height: 38px;
  padding: 0 12px;
  border-radius: 4px;
  background: #fee2e2;
  color: #b91c1c;
  font-size: 14px;
  line-height: 38px;
  vertical-align: middle;
}
.edit {
  height: 38px;
  border-radius: 4px;
  background: #f3f4f6;
  color: #4b5563;
  font-size: 14px;
}

/* Desktop taskbar */
.taskbar {
  position: relative;
  flex: none;
  display: flex;
  height: 48px;
  background: #080808;
  color: #fff;
  font-family: "Open Sans", "Noto Sans", sans-serif;
}
.wallpaper { position: absolute; inset: 0; width: 1920px; height: 48px; }
.apps {
  position: relative;
  display: flex;
  align-items: center;
  margin-left: 675px;
}
.app {
  position: relative;
  display: flex;
  justify-content: center;
  width: 44px;
}
.app svg { width: 24px; height: 24px; }
.app.open::after,
.app.current::after {
  content: "";
  position: absolute;
  bottom: -7px;
  width: 6px;
  height: 3px;
  border-radius: 2px;
  background: #a09a9c;
}
.app.current::after { width: 16px; background: #4cc2ff; }
.app.current::before {
  content: "";
  position: absolute;
  top: -8px;
  left: 2px;
  width: 36px;
  height: 40px;
  border: 1px solid #2c2c2c;
  border-radius: 4px;
  background: #1e1e1e;
  box-shadow: 4px 0 0 -1px #1c1c1c;
}
.app.current svg { position: relative; }

.tray {
  position: relative;
  display: flex;
  align-items: center;
  margin-left: auto;
  padding-right: 19px;
  font-size: 12px;
  letter-spacing: -.3px;
}
.net, .clock {
  display: flex;
  flex-direction: column;
  line-height: 16px;
  white-space: nowrap;
}
.net { width: 85px; }
.chev { width: 12px; height: 12px; margin-right: 10px; }
.sync { margin-right: 9px; }
.dis { margin-right: 7px; }
.temp {
  width: 25px;
  font: 700 13px/16px "Liberation Sans", sans-serif;
}
.hot { color: #f00; }
.ok { color: #0f4; }
.lan { margin: 0 8px 0 2px; }
.clock { width: 71px; text-align: right; }
.date { letter-spacing: -.15px; }
```
